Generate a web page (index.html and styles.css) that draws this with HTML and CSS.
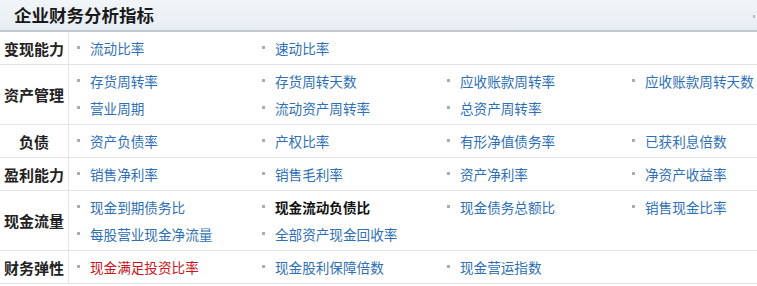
FILE: index.html
```html
<!DOCTYPE html>
<html lang="zh-CN">
<head>
<meta charset="utf-8">
<title>企业财务分析指标</title>
<link rel="stylesheet" href="styles.css">
</head>
<body>
<div class="panel">
  <div class="panel-head">
    <h2 class="panel-title">企业财务分析指标</h2>
    <span class="panel-mark"></span>
  </div>
  <table class="grid">
    <tr>
      <th class="cat">变现能力</th>
      <td class="items">
        <a class="item">流动比率</a>
        <a class="item">速动比率</a>
      </td>
    </tr>
    <tr>
      <th class="cat">资产管理</th>
      <td class="items">
        <a class="item">存货周转率</a>
        <a class="item">存货周转天数</a>
        <a class="item">应收账款周转率</a>
        <a class="item">应收账款周转天数</a>
        <a class="item">营业周期</a>
        <a class="item">流动资产周转率</a>
        <a class="item">总资产周转率</a>
      </td>
    </tr>
    <tr>
      <th class="cat">负债</th>
      <td class="items">
        <a class="item">资产负债率</a>
        <a class="item">产权比率</a>
        <a class="item">有形净值债务率</a>
        <a class="item">已获利息倍数</a>
      </td>
    </tr>
    <tr>
      <th class="cat">盈利能力</th>
      <td class="items">
        <a class="item">销售净利率</a>
        <a class="item">销售毛利率</a>
        <a class="item">资产净利率</a>
        <a class="item">净资产收益率</a>
      </td>
    </tr>
    <tr>
      <th class="cat">现金流量</th>
      <td class="items">
        <a class="item">现金到期债务比</a>
        <a class="item item-current">现金流动负债比</a>
        <a class="item">现金债务总额比</a>
        <a class="item">销售现金比率</a>
        <a class="item">每股营业现金净流量</a>
        <a class="item">全部资产现金回收率</a>
      </td>
    </tr>
    <tr>
      <th class="cat">财务弹性</th>
      <td class="items">
        <a class="item item-hot">现金满足投资比率</a>
        <a class="item">现金股利保障倍数</a>
        <a class="item">现金营运指数</a>
      </td>
    </tr>
  </table>
</div>
</body>
</html>
```
FILE: styles.css
```css
html, body {
  margin: 0;
  padding: 0;
  background: #ffffff;
}

body {
  font-family: "Noto Sans CJK SC", "Liberation Sans", sans-serif;
  width: 757px;
  height: 286px;
  overflow: hidden;
}

.panel {
  width: 757px;
}

.panel-head {
  height: 30px;
  display: flex;
  align-items: center;
  justify-content: space-between;
  padding: 0 2px 0 14px;
  background: linear-gradient(#f1f5f8 0, #e9eff4 24px, #e6edf2 30px);
  border-bottom: 2px solid #c3c9cf;
}

.panel-title {
  margin: 0;
  font-size: 17.5px;
  font-weight: bold;
  color: #1a1a1a;
  line-height: 30px;
}

.panel-mark {
  width: 2px;
  height: 3px;
  background: #b6bcc2;
  margin-top: 2px;
}

.grid {
  width: 757px;
  border-collapse: collapse;
  table-layout: fixed;
}

.grid tr {
  border-bottom: 1px solid #e1e4e7;
}

.cat {
  width: 68px;
  padding: 0;
  font-size: 15px;
  font-weight: bold;
  color: #222222;
  text-align: center;
  vertical-align: middle;
  border-right: 1px solid #e1e5e9;
  white-space: nowrap;
}

.items {
  padding: 2px 0 3px 8px;
  display: grid;
  grid-template-columns: 185px 185px 185px minmax(0, 1fr);
}

.item {
  display: flex;
  align-items: center;
  height: 27px;
  font-size: 13.6px;
  color: #2f6fb4;
  white-space: nowrap;
  text-decoration: none;
  overflow: hidden;
}

.item::before {
  content: "";
  width: 3px;
  height: 3px;
  background: #a8adb2;
  margin-right: 10px;
  flex: none;
}

.item-current {
  color: #111111;
  font-weight: bold;
}

.item-hot {
  color: #c8161d;
}
```
